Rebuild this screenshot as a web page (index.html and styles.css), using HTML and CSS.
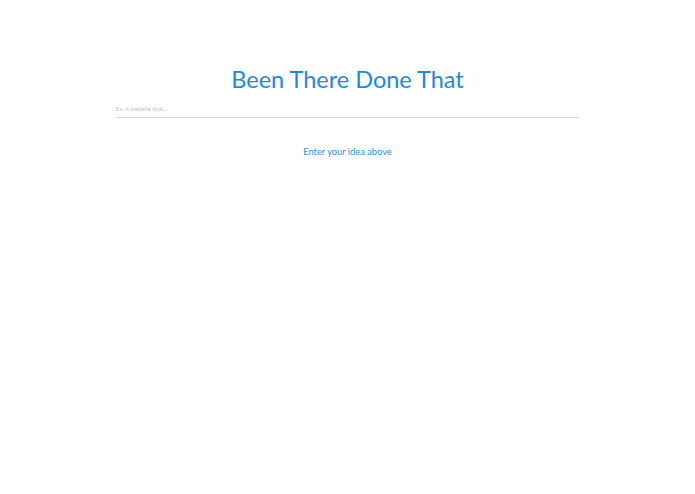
FILE: index.html
```html
<!DOCTYPE html>
<html>
<head>
<meta charset="utf-8">
<link rel="stylesheet" href="styles.css">
</head>
<body>
<div class="wrap">
  <h1 class="title">Been There Done That</h1>
  <input class="idea" type="text" placeholder="Ex. A website that...">
  <p class="hint">Enter your idea above</p>
</div>
</body>
</html>
```
FILE: styles.css
```css
html, body {
  margin: 0;
  padding: 0;
  background: #ffffff;
  font-family: Lato, "Open Sans", sans-serif;
}
.wrap {
  width: 66.67%;
  margin: 0 auto;
  padding-top: 61px;
  display: flex;
  flex-direction: column;
  align-items: stretch;
}
.title {
  margin: 0;
  text-align: center;
  font-weight: 400;
  font-size: 23.5px;
  line-height: 36px;
  color: #1e88e5;
}
.idea {
  margin-top: 2px;
  border: none;
  border-bottom: 1px solid #d6d6d6;
  outline: none;
  padding: 0;
  height: 18px;
  font-family: inherit;
  font-size: 6px;
  color: #555;
  background: transparent;
}
.idea::placeholder {
  color: #c4c4c4;
}
.hint {
  margin: 27px 0 0;
  text-align: center;
  font-size: 9.3px;
  line-height: 14px;
  color: #2b8fdb;
}
```
